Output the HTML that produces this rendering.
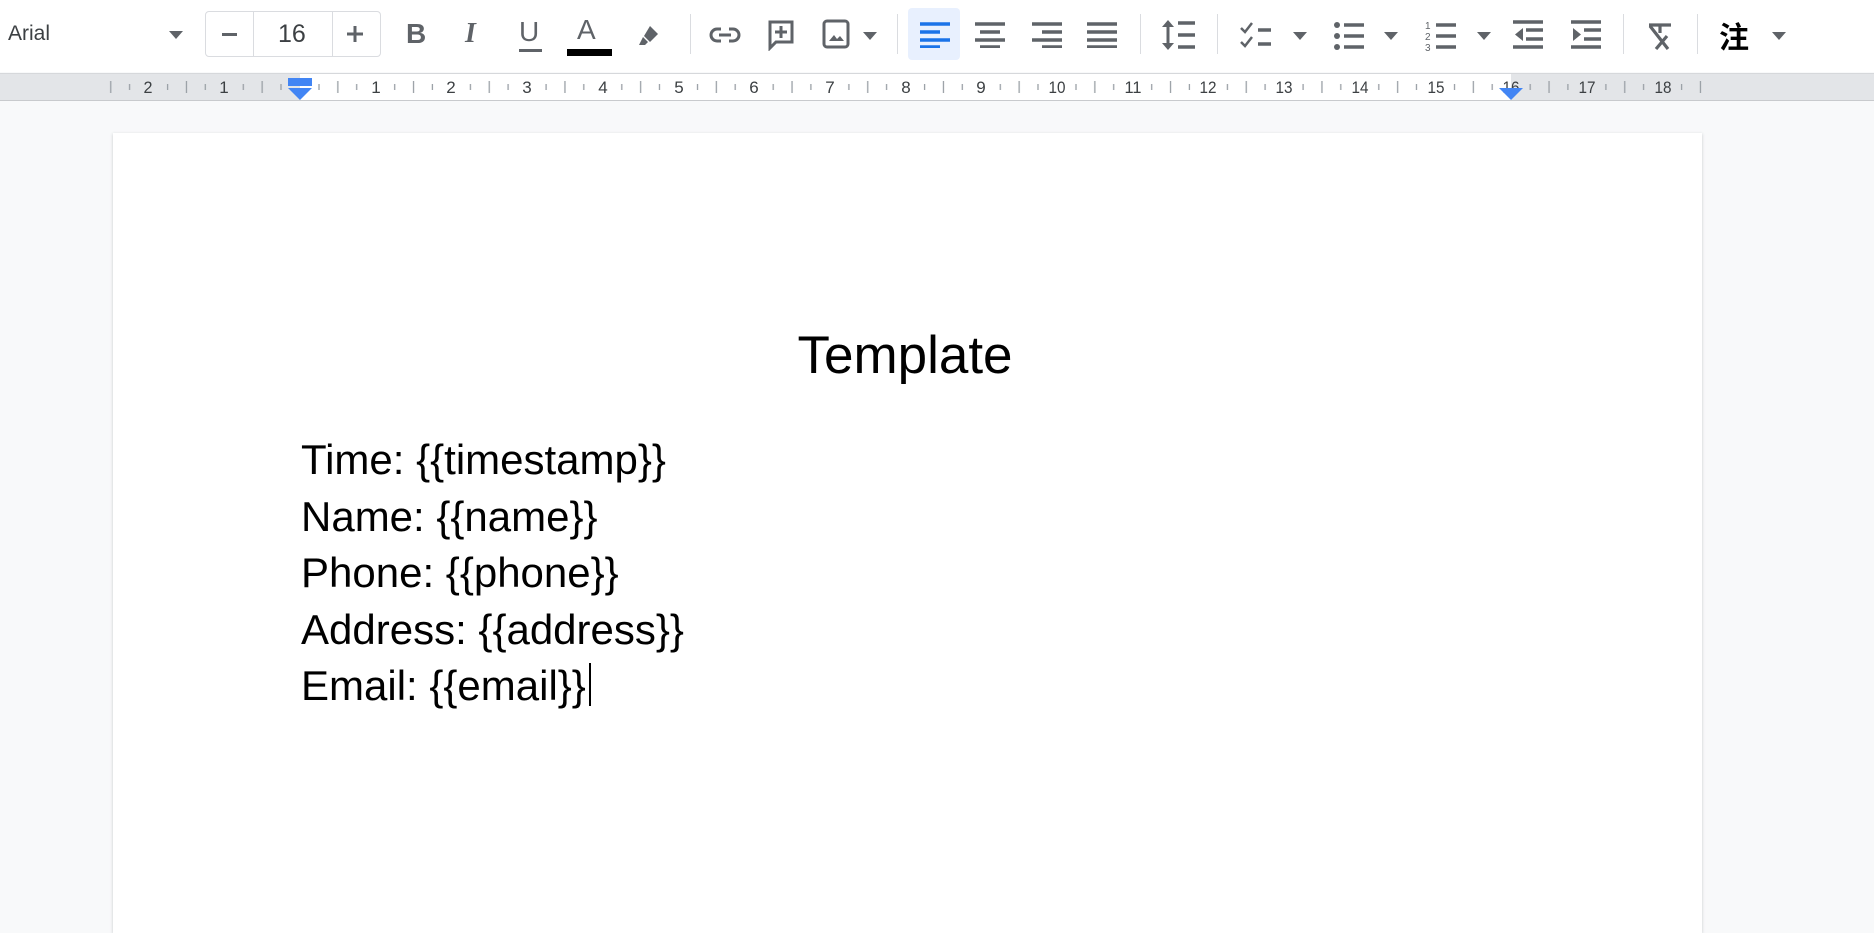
<!DOCTYPE html>
<html><head><meta charset="utf-8"><style>
*{margin:0;padding:0;box-sizing:border-box}
body{width:1874px;height:912px;overflow:hidden;background:#f8f9fa;font-family:"Liberation Sans",Arial,sans-serif;position:relative}
#tb{position:absolute;left:0;top:0;width:1874px;height:72px;background:#fff}
.ic{position:absolute;top:20px}
.sep{position:absolute;top:14px;width:1px;height:40px;background:#dadce0}
#ruler{position:absolute;left:0;top:73px;width:1874px;height:28px;background:#e3e5e8;border-top:1px solid #d6d8db;border-bottom:1px solid #c8cacd}
#page{position:absolute;left:113px;top:133px;width:1589px;height:800px;background:#fff;box-shadow:0 1px 3px rgba(60,64,67,.25)}
.t{position:absolute;color:#000;white-space:nowrap}
</style></head><body>
<div id="tb">
<div class="t" style="left:8px;top:22px;font-size:21px;color:#3c4043">Arial</div>
<svg class="ic" style="left:168px;top:30px" width="16" height="10"><path d="M1 1h14L8 9z" fill="#5f6368"/></svg>
<div style="position:absolute;left:205px;top:11px;width:176px;height:46px;border:1px solid #dadce0;border-radius:4px"></div>
<div style="position:absolute;left:253px;top:11px;width:1px;height:46px;background:#dadce0"></div>
<div style="position:absolute;left:332px;top:11px;width:1px;height:46px;background:#dadce0"></div>
<div style="position:absolute;left:222px;top:33px;width:15px;height:3px;background:#5f6368"></div>
<div class="t" style="left:278px;top:20px;font-size:25px;color:#3c4043">16</div>
<svg class="ic" style="left:346px;top:25px" width="18" height="18"><path d="M9 1v16M1 9h16" stroke="#5f6368" stroke-width="3"/></svg>
<div class="t" style="left:406px;top:18px;font-size:28px;font-weight:bold;color:#5f6368">B</div>
<div class="t" style="left:465px;top:18px;font-size:28px;font-style:italic;font-weight:bold;color:#5f6368;font-family:'Liberation Serif',serif">I</div>
<div class="t" style="left:519px;top:16px;font-size:28px;color:#5f6368">U</div>
<div style="position:absolute;left:519px;top:49px;width:23px;height:3px;background:#5f6368"></div>
<div class="t" style="left:577px;top:14px;font-size:28px;color:#5f6368">A</div>
<div style="position:absolute;left:567px;top:49px;width:45px;height:7px;background:#000"></div>
<svg class="ic" style="left:636px;top:22px" width="28" height="26"><path d="M14 4l8 8-8 8-6-6z M7 15l5 5-3 3H3z" fill="#5f6368"/></svg>
<div class="sep" style="left:690px"></div>
<svg class="ic" style="left:708px;top:26px" width="34" height="18"><path d="M13 3H9a6 6 0 000 12h4M21 3h4a6 6 0 010 12h-4M11 9h12" fill="none" stroke="#5f6368" stroke-width="3"/></svg>
<svg class="ic" style="left:767px;top:19px" width="28" height="32"><path d="M3 3h22v20H9l-6 6z" fill="none" stroke="#5f6368" stroke-width="3"/><path d="M14 7v12M8 13h12" stroke="#5f6368" stroke-width="3"/></svg>
<svg class="ic" style="left:822px;top:19px" width="28" height="30"><rect x="2" y="2" width="24" height="26" rx="3" fill="none" stroke="#5f6368" stroke-width="3"/><path d="M7 22l5-6 3 4 3-3 4 5z" fill="#5f6368"/></svg>
<svg class="ic" style="left:862px;top:31px" width="16" height="10"><path d="M1 1h14L8 9z" fill="#5f6368"/></svg>
<div class="sep" style="left:897px"></div>
<div style="position:absolute;left:908px;top:8px;width:52px;height:52px;background:#e8f0fe;border-radius:4px"></div>
<svg class="ic" style="left:920px;top:22px" width="30" height="26"><path d="M0 2h30M0 10h20M0 18h30M0 25h20" stroke="#1a73e8" stroke-width="3.5"/></svg>
<svg class="ic" style="left:975px;top:22px" width="30" height="26"><path d="M0 2h30M5 10h20M0 18h30M5 25h20" stroke="#5f6368" stroke-width="3.5"/></svg>
<svg class="ic" style="left:1032px;top:22px" width="30" height="26"><path d="M0 2h30M10 10h20M0 18h30M10 25h20" stroke="#5f6368" stroke-width="3.5"/></svg>
<svg class="ic" style="left:1087px;top:22px" width="30" height="26"><path d="M0 2h30M0 10h30M0 18h30M0 25h30" stroke="#5f6368" stroke-width="3.5"/></svg>
<div class="sep" style="left:1140px"></div>
<svg class="ic" style="left:1160px;top:18px" width="36" height="34"><path d="M8 4v26" stroke="#5f6368" stroke-width="3"/><path d="M2 9l6-7 6 7zM2 25l6 7 6-7z" fill="#5f6368"/><path d="M18 5h17M18 17h17M18 29h17" stroke="#5f6368" stroke-width="3.5"/></svg>
<div class="sep" style="left:1217px"></div>
<svg class="ic" style="left:1239px;top:20px" width="34" height="30"><path d="M2 8l4 4 7-9M2 22l4 4 7-9" fill="none" stroke="#5f6368" stroke-width="2.5"/><path d="M19 10h13M19 24h13" stroke="#5f6368" stroke-width="3.5"/></svg>
<svg class="ic" style="left:1292px;top:31px" width="16" height="10"><path d="M1 1h14L8 9z" fill="#5f6368"/></svg>
<svg class="ic" style="left:1333px;top:22px" width="32" height="28"><circle cx="4" cy="3" r="3" fill="#5f6368"/><circle cx="4" cy="14" r="3" fill="#5f6368"/><circle cx="4" cy="25" r="3" fill="#5f6368"/><path d="M11 3h20M11 14h20M11 25h20" stroke="#5f6368" stroke-width="3.5"/></svg>
<svg class="ic" style="left:1383px;top:31px" width="16" height="10"><path d="M1 1h14L8 9z" fill="#5f6368"/></svg>
<svg class="ic" style="left:1425px;top:20px" width="32" height="32"><text x="0" y="9" font-size="10" fill="#5f6368" font-family="Liberation Sans">1</text><text x="0" y="20" font-size="10" fill="#5f6368" font-family="Liberation Sans">2</text><text x="0" y="31" font-size="10" fill="#5f6368" font-family="Liberation Sans">3</text><path d="M11 5h20M11 16h20M11 27h20" stroke="#5f6368" stroke-width="3.5"/></svg>
<svg class="ic" style="left:1476px;top:31px" width="16" height="10"><path d="M1 1h14L8 9z" fill="#5f6368"/></svg>
<svg class="ic" style="left:1513px;top:20px" width="30" height="30"><path d="M0 2h30M13 10h17M13 19h17M0 27h30" stroke="#5f6368" stroke-width="3.5"/><path d="M10 8v13l-8-6.5z" fill="#5f6368"/></svg>
<svg class="ic" style="left:1571px;top:20px" width="30" height="30"><path d="M0 2h30M13 10h17M13 19h17M0 27h30" stroke="#5f6368" stroke-width="3.5"/><path d="M2 8v13l8-6.5z" fill="#5f6368"/></svg>
<div class="sep" style="left:1623px"></div>
<svg class="ic" style="left:1645px;top:22px" width="30" height="28"><path d="M4 3h22M15 3v8M5 4l18 23M22 14l-11 13" stroke="#5f6368" stroke-width="3.2" fill="none"/></svg>
<div class="sep" style="left:1697px"></div>
<div class="t" style="left:1719px;top:17px;font-size:30px;font-weight:bold;font-family:'Noto Sans CJK SC',sans-serif;line-height:36px">注</div>
<svg class="ic" style="left:1771px;top:31px" width="16" height="10"><path d="M1 1h14L8 9z" fill="#5f6368"/></svg>
</div>
<div id="ruler">
<div style="position:absolute;left:300px;top:0;width:1211px;height:26px;background:#fff"></div>
<svg style="position:absolute;left:0;top:0" width="1874" height="26">
<defs><pattern id="p" x="300" y="0" width="75.7" height="26" patternUnits="userSpaceOnUse">
<path d="M19 10v6M56.7 10v6" stroke="#9aa0a6" stroke-width="1.3"/><path d="M37.85 7v12" stroke="#9aa0a6" stroke-width="1.3"/></pattern></defs>
<rect x="108" y="0" width="1595" height="26" fill="url(#p)"/>
<g font-size="17" fill="#3c4043" font-family="Liberation Sans" text-anchor="middle" transform="scale(1,1)">
<text x="148" y="19" textLength="9" lengthAdjust="spacingAndGlyphs">2</text><text x="224" y="19">1</text>
<text x="376" y="19">1</text><text x="451" y="19">2</text><text x="527" y="19">3</text><text x="603" y="19">4</text><text x="679" y="19">5</text><text x="754" y="19">6</text><text x="830" y="19">7</text><text x="906" y="19">8</text><text x="981" y="19">9</text><text x="1057" y="19" textLength="17" lengthAdjust="spacingAndGlyphs">10</text><text x="1133" y="19" textLength="17" lengthAdjust="spacingAndGlyphs">11</text><text x="1208" y="19" textLength="17" lengthAdjust="spacingAndGlyphs">12</text><text x="1284" y="19" textLength="17" lengthAdjust="spacingAndGlyphs">13</text><text x="1360" y="19" textLength="17" lengthAdjust="spacingAndGlyphs">14</text><text x="1436" y="19" textLength="17" lengthAdjust="spacingAndGlyphs">15</text><text x="1511" y="19" textLength="17" lengthAdjust="spacingAndGlyphs">16</text><text x="1587" y="19" textLength="17" lengthAdjust="spacingAndGlyphs">17</text><text x="1663" y="19" textLength="17" lengthAdjust="spacingAndGlyphs">18</text>
</g>
<rect x="288" y="4" width="24" height="8" fill="#4285f4"/><path d="M288 14h24l-12 12z" fill="#4285f4"/>
<path d="M1499 14h24l-12 12z" fill="#4285f4"/>
</svg>
</div>
<div id="page"></div>
<div class="t" style="left:905px;top:326px;transform:translateX(-50%);font-size:53px;line-height:60px">Template</div>
<div class="t" style="left:301px;top:432px;font-size:42px;line-height:56.5px">Time: {{timestamp}}<br>Name: {{name}}<br>Phone: {{phone}}<br>Address: {{address}}<br>Email: {{email}}</div>
<div style="position:absolute;left:589px;top:663px;width:2px;height:43px;background:#000"></div>
</body></html>
